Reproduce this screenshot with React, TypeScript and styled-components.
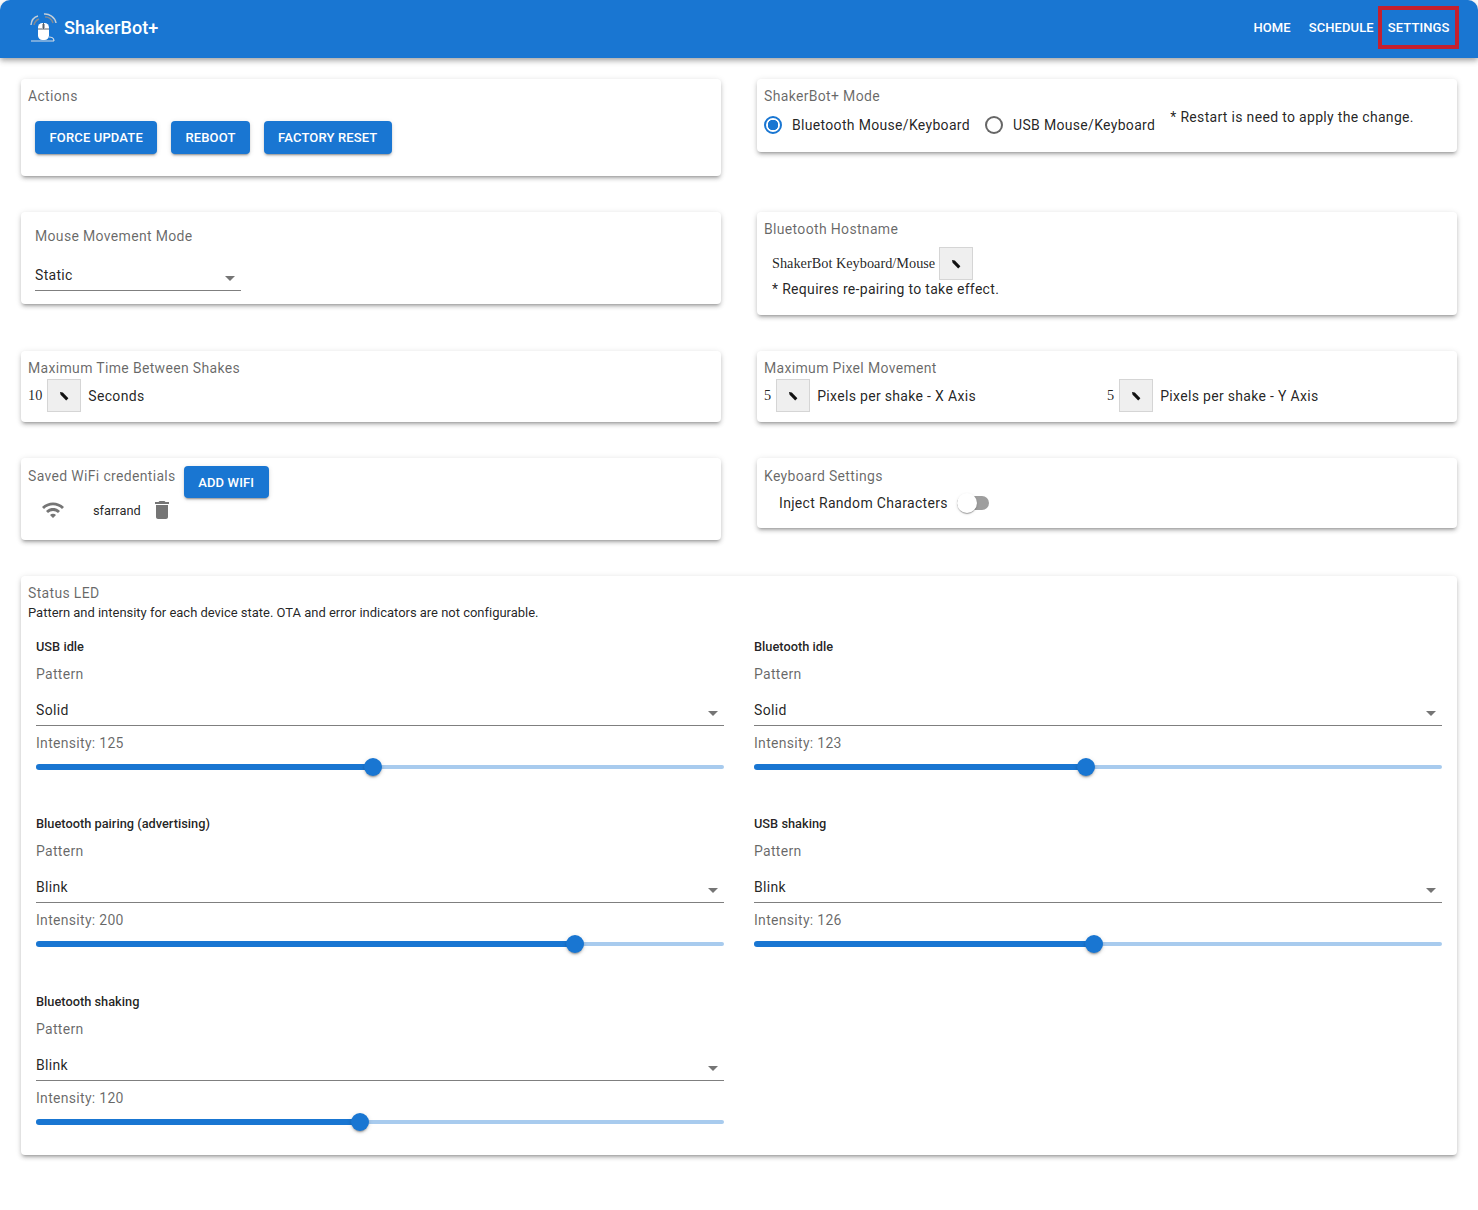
import { createGlobalStyle, styled } from "styled-components";

const GlobalStyle = createGlobalStyle`
  * { box-sizing: border-box; }
  body {
    margin: 0;
    background: #fff;
    font-family: Roboto, "Liberation Sans", sans-serif;
    color: rgba(0, 0, 0, 0.87);
  }
`;

const leds = [
  { name: "USB idle", pattern: "Solid", value: 125, pct: 49 },
  { name: "Bluetooth idle", pattern: "Solid", value: 123, pct: 48.2 },
  { name: "Bluetooth pairing (advertising)", pattern: "Blink", value: 200, pct: 78.4 },
  { name: "USB shaking", pattern: "Blink", value: 126, pct: 49.4 },
  { name: "Bluetooth shaking", pattern: "Blink", value: 120, pct: 47.1 },
];

function Pencil() {
  return (
    <svg width="12" height="12" viewBox="0 0 12 12">
      <path d="M2 2 L4.8 2.6 L10.4 8.2 L8.2 10.4 L2.6 4.8 Z" fill="#111" />
    </svg>
  );
}

function Logo() {
  return (
    <svg width="28" height="30" viewBox="0 0 28 30" fill="none">
      <path d="M8 3 C4 4 1.5 7 1 12" stroke="#c3ced9" strokeWidth="1.5" />
      <path d="M9 6 C6.5 7 4.5 9 4 12" stroke="#7f8a96" strokeWidth="1.5" />
      <path d="M14 1 C19 .5 25 4 26 10" stroke="#c3ced9" strokeWidth="1.5" />
      <path d="M15 4 C18.5 3.5 22 6 23 10" stroke="#7f8a96" strokeWidth="1.5" />
      <rect x="8" y="10" width="11" height="17" rx="4.5" fill="#fff" />
      <path d="M13.5 10 V16 M8 16 H19" stroke="#55606c" strokeWidth="1" />
      <rect x="12.5" y="11" width="2" height="4" fill="#55606c" />
      <path d="M1 28 H24 M19 24 C21 24 24 25 24 28" stroke="#d3dce6" strokeWidth="1.2" />
    </svg>
  );
}

function WifiIcon() {
  return (
    <svg width="24" height="24" viewBox="0 0 24 24" fill="#757575">
      <path d="m1 9 2 2c4.97-4.97 13.03-4.97 18 0l2-2C16.93 2.93 7.08 2.93 1 9zm8 8 3 3 3-3c-1.65-1.66-4.34-1.66-6 0zm-4-4 2 2c2.76-2.76 7.24-2.76 10 0l2-2C15.14 9.14 8.87 9.14 5 13z" />
    </svg>
  );
}

function TrashIcon() {
  return (
    <svg width="24" height="24" viewBox="0 0 24 24" fill="#757575">
      <path d="M6 19c0 1.1.9 2 2 2h8c1.1 0 2-.9 2-2V7H6v12zM19 4h-3.5l-1-1h-5l-1 1H5v2h14V4z" />
    </svg>
  );
}

function SelectField({ value, width }: { value: string; width?: number }) {
  return (
    <SelectBox $width={width}>
      <span>{value}</span>
      <Caret />
    </SelectBox>
  );
}

export default function App() {
  return (
    <>
      <GlobalStyle />
      <AppBar>
        <Brand>
          <Logo />
          <BrandName>ShakerBot+</BrandName>
        </Brand>
        <Nav>
          <NavLink>HOME</NavLink>
          <NavLink>SCHEDULE</NavLink>
          <NavLink $active>SETTINGS</NavLink>
        </Nav>
      </AppBar>

      <Page>
        <Columns>
          <Card $height={97}>
            <CardTitle>Actions</CardTitle>
            <ButtonRow>
              <Button>FORCE UPDATE</Button>
              <Button>REBOOT</Button>
              <Button>FACTORY RESET</Button>
            </ButtonRow>
          </Card>
          <Card $height={73}>
            <CardTitle>ShakerBot+ Mode</CardTitle>
            <ModeRow>
              <RadioLabel>
                <Radio $checked />
                Bluetooth Mouse/Keyboard
              </RadioLabel>
              <RadioLabel>
                <Radio />
                USB Mouse/Keyboard
              </RadioLabel>
              <ModeNote>* Restart is need to apply the change.</ModeNote>
            </ModeRow>
          </Card>
        </Columns>

        <Columns>
          <MovementCard $height={92}>
            <MovementTitle>Mouse Movement Mode</MovementTitle>
            <SelectField value="Static" width={206} />
          </MovementCard>
          <Card $height={103}>
            <CardTitle>Bluetooth Hostname</CardTitle>
            <HostRow>
              <SerifValue>ShakerBot Keyboard/Mouse</SerifValue>
              <EditButton><Pencil /></EditButton>
            </HostRow>
            <HostNote>* Requires re-pairing to take effect.</HostNote>
          </Card>
        </Columns>

        <Columns>
          <Card $height={71}>
            <CardTitle>Maximum Time Between Shakes</CardTitle>
            <ValueRow>
              <SerifValue>10</SerifValue>
              <EditButton><Pencil /></EditButton>
              <Unit>Seconds</Unit>
            </ValueRow>
          </Card>
          <Card $height={71}>
            <CardTitle>Maximum Pixel Movement</CardTitle>
            <PixelGrid>
              <ValueRow>
                <SerifValue>5</SerifValue>
                <EditButton><Pencil /></EditButton>
                <Unit>Pixels per shake - X Axis</Unit>
              </ValueRow>
              <ValueRow>
                <SerifValue>5</SerifValue>
                <EditButton><Pencil /></EditButton>
                <Unit>Pixels per shake - Y Axis</Unit>
              </ValueRow>
            </PixelGrid>
          </Card>
        </Columns>

        <Columns>
          <Card $height={82}>
            <WifiHead>
              <WifiTitle>Saved WiFi credentials</WifiTitle>
              <AddWifiButton>ADD WIFI</AddWifiButton>
            </WifiHead>
            <WifiRow>
              <WifiIcon />
              <WifiName>sfarrand</WifiName>
              <TrashIcon />
            </WifiRow>
          </Card>
          <Card $height={70}>
            <KeyboardTitle>Keyboard Settings</KeyboardTitle>
            <SwitchRow>
              <Unit>Inject Random Characters</Unit>
              <SwitchTrack>
                <SwitchThumb />
              </SwitchTrack>
            </SwitchRow>
          </Card>
        </Columns>

        <LedCard>
          <CardTitle>Status LED</CardTitle>
          <LedIntro>
            Pattern and intensity for each device state. OTA and error indicators are not configurable.
          </LedIntro>
          <LedGrid>
            {leds.map((led) => (
              <LedItem key={led.name}>
                <LedName>{led.name}</LedName>
                <PatternLabel>Pattern</PatternLabel>
                <SelectField value={led.pattern} />
                <IntensityLabel>Intensity: {led.value}</IntensityLabel>
                <Slider>
                  <SliderRail />
                  <SliderTrack style={{ width: `${led.pct}%` }} />
                  <SliderThumb style={{ left: `${led.pct}%` }} />
                </Slider>
              </LedItem>
            ))}
          </LedGrid>
        </LedCard>
      </Page>
    </>
  );
}

const AppBar = styled.header`
  height: 58px;
  background: #1976d2;
  border-radius: 10px 10px 0 0;
  box-shadow: 0 2px 4px -1px rgba(0, 0, 0, 0.2), 0 4px 5px rgba(0, 0, 0, 0.14), 0 1px 10px rgba(0, 0, 0, 0.12);
  display: flex;
  align-items: center;
  justify-content: space-between;
  padding: 0 19px 3px 30px;
  color: #fff;
  position: relative;
`;

const Brand = styled.div`
  display: flex;
  align-items: center;
  gap: 6px;
`;

const BrandName = styled.div`
  font-size: 18px;
  font-weight: 500;
  letter-spacing: 0.1px;
`;

const Nav = styled.nav`
  display: flex;
  align-items: center;
`;

const NavLink = styled.a<{ $active?: boolean }>`
  font-size: 13px;
  font-weight: 500;
  letter-spacing: 0.1px;
  padding: ${(p) => (p.$active ? "14px 9.5px" : "0")};
  margin-left: ${(p) => (p.$active ? "4.5px" : "18px")};
  outline: ${(p) => (p.$active ? "4px solid #c4202f" : "none")};
  outline-offset: -4px;
`;

const Page = styled.main`
  padding: 21px 21px 54px;
  display: flex;
  flex-direction: column;
`;

const Columns = styled.div`
  display: grid;
  grid-template-columns: 700px 700px;
  gap: 36px;
  align-items: start;
  margin-bottom: 36px;
`;

const Card = styled.section<{ $height: number }>`
  height: ${(p) => p.$height}px;
  background: #fff;
  border-radius: 4px;
  padding: 8px 7px;
  box-shadow: 0 3px 3px -2px rgba(0, 0, 0, 0.25), 0 3px 4px rgba(0, 0, 0, 0.14), 0 1px 6px rgba(0, 0, 0, 0.12);
`;

const MovementCard = styled(Card)`
  padding: 15px 14px;
`;

const CardTitle = styled.div`
  font-size: 14px;
  line-height: 18px;
  letter-spacing: 0.33px;
  color: rgba(0, 0, 0, 0.6);
`;

const MovementTitle = styled(CardTitle)`
  margin-bottom: 18px;
`;

const KeyboardTitle = styled(CardTitle)`
  margin-top: 1px;
`;

const ButtonRow = styled.div`
  display: flex;
  gap: 13.5px;
  margin: 16px 0 0 7px;
`;

const Button = styled.button`
  height: 33px;
  padding: 0 14.5px;
  border: none;
  border-radius: 4px;
  background: #1976d2;
  color: #fff;
  font-family: inherit;
  font-size: 13px;
  font-weight: 500;
  letter-spacing: 0.15px;
  box-shadow: 0 3px 1px -2px rgba(0, 0, 0, 0.2), 0 2px 2px rgba(0, 0, 0, 0.14), 0 1px 5px rgba(0, 0, 0, 0.12);
`;

const AddWifiButton = styled(Button)`
  height: 32px;
`;

const ModeRow = styled.div`
  display: flex;
  align-items: flex-start;
  margin-top: 8px;
`;

const RadioLabel = styled.label`
  display: flex;
  align-items: center;
  gap: 10px;
  font-size: 14px;
  letter-spacing: 0.32px;
  height: 24px;
  margin-right: 15px;
  white-space: nowrap;
`;

const Radio = styled.span<{ $checked?: boolean }>`
  width: 18px;
  height: 18px;
  border-radius: 50%;
  border: 2px solid ${(p) => (p.$checked ? "#1976d2" : "rgba(0, 0, 0, 0.6)")};
  background: ${(p) => (p.$checked ? "radial-gradient(circle, #1976d2 0 5px, #fff 5.5px)" : "#fff")};
`;

const ModeNote = styled.div`
  font-size: 14px;
  letter-spacing: 0.32px;
  margin: -8px 0 0 0;
  line-height: 24px;
`;

const HostRow = styled.div`
  display: flex;
  align-items: center;
  gap: 4px;
  margin: 9px 0 0 8px;
`;

const HostNote = styled.div`
  font-size: 14px;
  letter-spacing: 0.32px;
  line-height: 18px;
  margin: 0 0 0 8px;
`;

const SerifValue = styled.span`
  font-family: "Liberation Serif", serif;
  font-size: 14.3px;
`;

const EditButton = styled.button`
  width: 34px;
  height: 33px;
  padding: 0;
  display: flex;
  align-items: center;
  justify-content: center;
  background: #efefef;
  border: 1px solid #d5d5d5;
`;

const ValueRow = styled.div`
  display: flex;
  align-items: center;
  gap: 5px;
  margin-top: 2px;
`;

const Unit = styled.span`
  font-size: 14px;
  letter-spacing: 0.32px;
  margin-left: 2px;
`;

const PixelGrid = styled.div`
  display: grid;
  grid-template-columns: 343px 1fr;
`;

const WifiHead = styled.div`
  display: flex;
  align-items: flex-start;
  gap: 8px;
`;

const WifiTitle = styled(CardTitle)`
  margin-top: 1px;
`;

const WifiRow = styled.div`
  display: flex;
  align-items: center;
  margin: 0 0 0 13px;
`;

const WifiName = styled.span`
  font-size: 12.8px;
  margin: 0 9px 0 28px;
`;

const SwitchRow = styled.div`
  display: flex;
  align-items: center;
  gap: 9px;
  margin: 10px 0 0 13px;
`;

const SwitchTrack = styled.span`
  width: 32px;
  height: 14px;
  border-radius: 7px;
  background: #9e9e9e;
  position: relative;
`;

const SwitchThumb = styled.span`
  position: absolute;
  left: 0;
  top: -3px;
  width: 20px;
  height: 20px;
  border-radius: 50%;
  background: #fff;
  box-shadow: 0 2px 1px -1px rgba(0, 0, 0, 0.2), 0 1px 1px rgba(0, 0, 0, 0.14), 0 1px 3px rgba(0, 0, 0, 0.12);
`;

const LedCard = styled.section`
  background: #fff;
  border-radius: 4px;
  padding: 8px 7px 0;
  height: 579px;
  box-shadow: 0 3px 3px -2px rgba(0, 0, 0, 0.25), 0 3px 4px rgba(0, 0, 0, 0.14), 0 1px 6px rgba(0, 0, 0, 0.12);
`;

const LedIntro = styled.div`
  font-size: 13px;
  letter-spacing: -0.02px;
  line-height: 20px;
  margin-top: 1px;
`;

const LedGrid = styled.div`
  display: grid;
  grid-template-columns: 688px 688px;
  column-gap: 30px;
  margin: 13.8px 0 0 8px;
`;

const LedItem = styled.div`
  height: 177.7px;
`;

const LedName = styled.div`
  font-size: 12.8px;
  font-weight: 500;
  line-height: 20px;
`;

const PatternLabel = styled.div`
  font-size: 14px;
  letter-spacing: 0.3px;
  line-height: 20px;
  margin-top: 7px;
  margin-bottom: 14px;
  color: rgba(0, 0, 0, 0.6);
`;

const SelectBox = styled.div<{ $width?: number }>`
  width: ${(p) => (p.$width ? `${p.$width}px` : "100%")};
  height: 28px;
  display: flex;
  align-items: center;
  justify-content: space-between;
  border-bottom: 1px solid rgba(0, 0, 0, 0.5);
  font-size: 14px;
  letter-spacing: 0.32px;
  padding: 0 6px 3px 0;
`;

const Caret = styled.span`
  width: 0;
  height: 0;
  border-left: 5px solid transparent;
  border-right: 5px solid transparent;
  border-top: 5px solid rgba(0, 0, 0, 0.54);
  margin-top: 7px;
`;

const IntensityLabel = styled.div`
  font-size: 14px;
  letter-spacing: 0.3px;
  line-height: 20px;
  margin-top: 7px;
  color: rgba(0, 0, 0, 0.6);
`;

const Slider = styled.div`
  position: relative;
  height: 4px;
  margin-top: 12px;
`;

const SliderRail = styled.span`
  position: absolute;
  inset: 0;
  border-radius: 2px;
  background: #1976d2;
  opacity: 0.38;
`;

const SliderTrack = styled.span`
  position: absolute;
  left: 0;
  top: -1px;
  height: 6px;
  border-radius: 3px;
  background: #1976d2;
`;

const SliderThumb = styled.span`
  position: absolute;
  top: 2px;
  width: 18px;
  height: 18px;
  margin: -9px 0 0 -9px;
  border-radius: 50%;
  background: #1976d2;
  box-shadow: 0 3px 1px -2px rgba(0, 0, 0, 0.2), 0 2px 2px rgba(0, 0, 0, 0.14), 0 1px 5px rgba(0, 0, 0, 0.12);
`;
